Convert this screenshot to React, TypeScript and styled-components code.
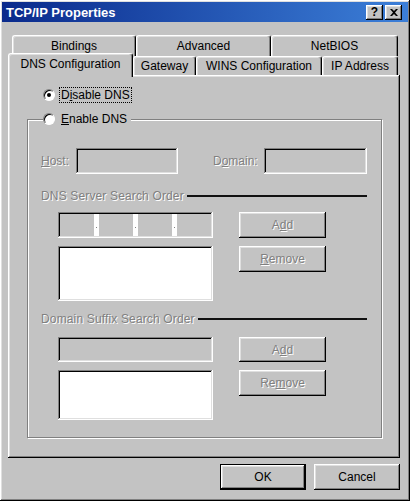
import React from "react";
import styled, { createGlobalStyle, css } from "styled-components";

const GlobalStyle = createGlobalStyle`
  html, body {
    margin: 0;
    padding: 0;
    background: #c3c3c3;
  }
  body {
    font-family: "Liberation Sans", Arial, sans-serif;
    font-size: 12px;
    color: #000;
  }
  * {
    box-sizing: border-box;
  }
`;

const raised = css`
  box-shadow: inset -1px -1px #000, inset 1px 1px #fff, inset -2px -2px #808080,
    inset 2px 2px #dfdfdf;
`;

const sunken = css`
  box-shadow: inset -1px -1px #fff, inset 1px 1px #808080, inset -2px -2px #dfdfdf,
    inset 2px 2px #000;
`;

const disabledText = css`
  color: #808080;
  text-shadow: 1px 1px 0 #fff;
`;

const Window = styled.div`
  width: 410px;
  height: 501px;
  padding: 2px;
  background: #c3c3c3;
  display: flex;
  flex-direction: column;
  ${raised};
`;

const TitleBar = styled.div`
  height: 20px;
  display: flex;
  align-items: center;
  padding: 0 6px 0 4px;
  background: linear-gradient(90deg, #0a2a8c, #3c7fd8);
  color: #fff;
  font-size: 13px;
  font-weight: 700;
`;

const TitleText = styled.span`
  flex: 1;
`;

const TitleButton = styled.div<{ $gap?: number }>`
  width: 17px;
  height: 15px;
  margin-left: ${(p) => p.$gap ?? 0}px;
  background: #c3c3c3;
  color: #000;
  display: flex;
  align-items: center;
  justify-content: center;
  font-size: 12px;
  font-weight: 700;
  ${raised};
`;

const TabRow = styled.div<{ $top: number; $left: number; $h: number }>`
  display: flex;
  margin-top: ${(p) => p.$top}px;
  padding-left: ${(p) => p.$left}px;
  height: ${(p) => p.$h}px;
  align-items: flex-start;
`;

const Tab = styled.div<{ $w: number; $active?: boolean; $h: number }>`
  width: ${(p) => p.$w}px;
  height: ${(p) => (p.$active ? p.$h + 5 : p.$h)}px;
  margin-top: ${(p) => (p.$active ? -3 : 0)}px;
  margin-bottom: ${(p) => (p.$active ? -2 : 0)}px;
  position: ${(p) => (p.$active ? "relative" : "static")};
  z-index: ${(p) => (p.$active ? 2 : "auto")};
  display: flex;
  align-items: center;
  justify-content: center;
  padding-bottom: ${(p) => (p.$active ? 3 : 0)}px;
  background: #c3c3c3;
  border: 1px solid;
  border-color: #fff #000 transparent #fff;
  border-bottom: none;
  border-radius: 3px 3px 0 0;
  box-shadow: inset -1px 0 #808080, inset 1px 1px #dfdfdf;
  white-space: nowrap;
`;

const Panel = styled.div`
  height: 383px;
  margin: 0 8px 0 6px;
  padding: 12px 18px 0 19px;
  display: flex;
  flex-direction: column;
  ${raised};
`;

const RadioRow = styled.div<{ $indent?: number }>`
  display: flex;
  align-items: center;
  height: 16px;
  margin-left: ${(p) => p.$indent ?? 0}px;
`;

const RadioDot = styled.span<{ $checked?: boolean }>`
  width: 12px;
  height: 12px;
  border-radius: 50%;
  background: #fff;
  box-shadow: inset 1px 1px 0 #000;
  border: 1px solid;
  border-color: #808080 #fff #fff #808080;
  display: flex;
  align-items: center;
  justify-content: center;
  flex-shrink: 0;

  &::after {
    content: "";
    width: 4px;
    height: 4px;
    border-radius: 50%;
    background: ${(p) => (p.$checked ? "#000" : "transparent")};
  }
`;

const RadioLabel = styled.span<{ $focused?: boolean }>`
  margin-left: 4px;
  padding: 0 1px;
  line-height: 14px;
  border: 1px dotted ${(p) => (p.$focused ? "#000" : "transparent")};
`;

const U = styled.span`
  text-decoration: underline;
`;

const GroupBox = styled.fieldset`
  margin: 8px 0 0 0;
  padding: 21px 14px 17px 13px;
  min-width: 0;
  border: 1px solid #808080;
  box-shadow: 1px 1px 0 #fff, inset 1px 1px 0 #fff;
`;

const Legend = styled.legend`
  margin-left: 2px;
  padding: 0 2px 0 0;
  background: #c3c3c3;
  height: 16px;
  display: flex;
  align-items: center;
`;

const FieldRow = styled.div`
  display: flex;
  align-items: center;
  height: 26px;
`;

const FieldLabel = styled.span<{ $w: number; $gap?: number }>`
  width: ${(p) => p.$w}px;
  margin-left: ${(p) => p.$gap ?? 0}px;
  ${disabledText};
`;

const Field = styled.div<{ $w?: number; $h: number; $white?: boolean }>`
  width: ${(p) => (p.$w ? `${p.$w}px` : "auto")};
  height: ${(p) => p.$h}px;
  background: ${(p) => (p.$white ? "#fff" : "#c3c3c3")};
  ${sunken};
`;

const IpField = styled.div`
  height: 26px;
  padding: 2px;
  display: flex;
  background: #c3c3c3;
  ${sunken};
`;

const IpSegment = styled.div`
  flex: 1;
`;

const IpDot = styled.div`
  width: 5px;
  background: #fff;
  display: flex;
  align-items: center;
  justify-content: center;

  &::after {
    content: "";
    width: 1px;
    height: 1px;
    margin-top: 4px;
    background: #808080;
  }
`;

const Heading = styled.div<{ $top: number }>`
  display: flex;
  align-items: center;
  height: 14px;
  margin-top: ${(p) => p.$top}px;
`;

const HeadingText = styled.span`
  ${disabledText};
  white-space: nowrap;
  letter-spacing: 0.15px;
`;

const HeadingLine = styled.div`
  flex: 1;
  height: 2px;
  margin-left: 3px;
  background: #111;
`;

const ListSection = styled.div<{ $top: number; $rows: string }>`
  display: grid;
  grid-template-columns: 155px 87px;
  grid-template-rows: ${(p) => p.$rows};
  column-gap: 26px;
  row-gap: 8px;
  margin: ${(p) => p.$top}px 0 0 17px;
  align-items: start;
`;

const Button = styled.div<{ $w: number; $h?: number; $disabled?: boolean; $default?: boolean }>`
  width: ${(p) => p.$w}px;
  height: ${(p) => p.$h ?? 26}px;
  display: flex;
  align-items: center;
  justify-content: center;
  background: #c3c3c3;
  ${raised};
  ${(p) => p.$disabled && disabledText};
  ${(p) =>
    p.$default &&
    css`
      border: 1px solid #000;
    `};
`;

const Footer = styled.div`
  display: flex;
  justify-content: flex-end;
  gap: 8px;
  margin-top: 6px;
  padding-right: 8px;
`;

function CloseIcon() {
  return (
    <svg width="8" height="7" viewBox="0 0 8 7">
      <path d="M0 0h2l2 2 2-2h2L5 3.5 8 7H6L4 5 2 7H0l3-3.5z" fill="#000" />
    </svg>
  );
}

function IpAddress() {
  return (
    <IpField>
      <IpSegment />
      <IpDot />
      <IpSegment />
      <IpDot />
      <IpSegment />
      <IpDot />
      <IpSegment />
    </IpField>
  );
}

const backTabs = [
  { label: "Bindings", w: 124 },
  { label: "Advanced", w: 135 },
  { label: "NetBIOS", w: 127 },
];

const frontTabs = [
  { label: "DNS Configuration", w: 125, active: true },
  { label: "Gateway", w: 63 },
  { label: "WINS Configuration", w: 126 },
  { label: "IP Address", w: 76 },
];

export default function App() {
  return (
    <>
      <GlobalStyle />
      <Window>
        <TitleBar>
          <TitleText>TCP/IP Properties</TitleText>
          <TitleButton>?</TitleButton>
          <TitleButton $gap={2}>
            <CloseIcon />
          </TitleButton>
        </TitleBar>

        <TabRow $top={13} $left={10} $h={21}>
          {backTabs.map((t) => (
            <Tab key={t.label} $w={t.w} $h={21}>
              {t.label}
            </Tab>
          ))}
        </TabRow>
        <TabRow $top={0} $left={6} $h={19}>
          {frontTabs.map((t) => (
            <Tab key={t.label} $w={t.w} $h={19} $active={t.active}>
              {t.label}
            </Tab>
          ))}
        </TabRow>

        <Panel>
          <RadioRow $indent={16}>
            <RadioDot $checked />
            <RadioLabel $focused>
              D<U>i</U>sable DNS
            </RadioLabel>
          </RadioRow>

          <GroupBox>
            <Legend>
              <RadioDot />
              <RadioLabel>
                <U>E</U>nable DNS
              </RadioLabel>
            </Legend>

            <FieldRow>
              <FieldLabel $w={35}>
                <U>H</U>ost:
              </FieldLabel>
              <Field $w={102} $h={26} />
              <FieldLabel $w={51} $gap={35}>
                D<U>o</U>main:
              </FieldLabel>
              <Field $w={103} $h={26} />
            </FieldRow>

            <Heading $top={15}>
              <HeadingText>DNS Server Search Order</HeadingText>
              <HeadingLine />
            </Heading>
            <ListSection $top={9} $rows="26px 55px">
              <IpAddress />
              <Button $w={87} $disabled>
                A<U>d</U>d
              </Button>
              <Field $h={55} $white />
              <Button $w={87} $disabled>
                <U>R</U>emove
              </Button>
            </ListSection>

            <Heading $top={11}>
              <HeadingText>Domain Suffix Search Order</HeadingText>
              <HeadingLine />
            </Heading>
            <ListSection $top={11} $rows="25px 50px">
              <Field $h={25} />
              <Button $w={87} $h={25} $disabled>
                A<U>d</U>d
              </Button>
              <Field $h={50} $white />
              <Button $w={87} $disabled>
                Re<U>m</U>ove
              </Button>
            </ListSection>
          </GroupBox>
        </Panel>

        <Footer>
          <Button $w={86} $default>
            OK
          </Button>
          <Button $w={86}>Cancel</Button>
        </Footer>
      </Window>
    </>
  );
}
